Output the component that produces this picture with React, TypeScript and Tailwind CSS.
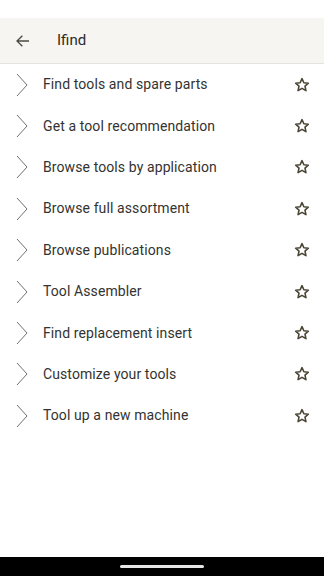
import React from 'react';

const items = [
  'Find tools and spare parts',
  'Get a tool recommendation',
  'Browse tools by application',
  'Browse full assortment',
  'Browse publications',
  'Tool Assembler',
  'Find replacement insert',
  'Customize your tools',
  'Tool up a new machine',
];

const Chevron = () => (
  <svg width="12" height="24" viewBox="0 0 12 24" fill="none">
    <path d="M1 1 L11 12 L1 23" stroke="#707070" strokeWidth="1" />
  </svg>
);

const Star = () => (
  <svg width="16" height="16" viewBox="0 0 24 24" fill="none">
    <path
      d="M12 2.5 L14.8 8.6 L21.5 9.3 L16.5 13.8 L17.9 20.5 L12 17.1 L6.1 20.5 L7.5 13.8 L2.5 9.3 L9.2 8.6 Z"
      stroke="#4a4535"
      strokeWidth="2.4"
      strokeLinejoin="round"
    />
  </svg>
);

export default function App() {
  return (
    <div
      className="w-[324px] h-[576px] bg-white flex flex-col overflow-hidden"
      style={{ fontFamily: 'Roboto, "Noto Sans", sans-serif' }}
    >
      <div className="h-[18px] bg-white" />
      <div className="h-[46px] bg-[#f6f5f2] border-b border-[#e6e4df] flex items-center">
        <div className="w-[44px] flex justify-center pl-[1px]">
          <svg width="16" height="16" viewBox="0 0 24 24" fill="none">
            <path d="M21 12 H3.5 M11 4 L3 12 L11 20" stroke="#4d4a42" strokeWidth="2" />
          </svg>
        </div>
        <span className="ml-[13px] text-[15px] text-[#2c2b28]">Ifind</span>
      </div>
      <div className="flex-1 flex flex-col">
        {items.map((label) => (
          <div key={label} className="h-[41.4px] flex items-center">
            <div className="w-[43px] pl-[16px] flex items-center">
              <Chevron />
            </div>
            <span className="flex-1 text-[14px] text-[#333331] tracking-[0.1px]">{label}</span>
            <div className="w-[44px] flex justify-center">
              <Star />
            </div>
          </div>
        ))}
      </div>
      <div className="h-[19px] bg-black flex justify-center items-center">
        <div className="w-[84px] h-[3px] rounded-full bg-[#e6e6e6]" />
      </div>
    </div>
  );
}
